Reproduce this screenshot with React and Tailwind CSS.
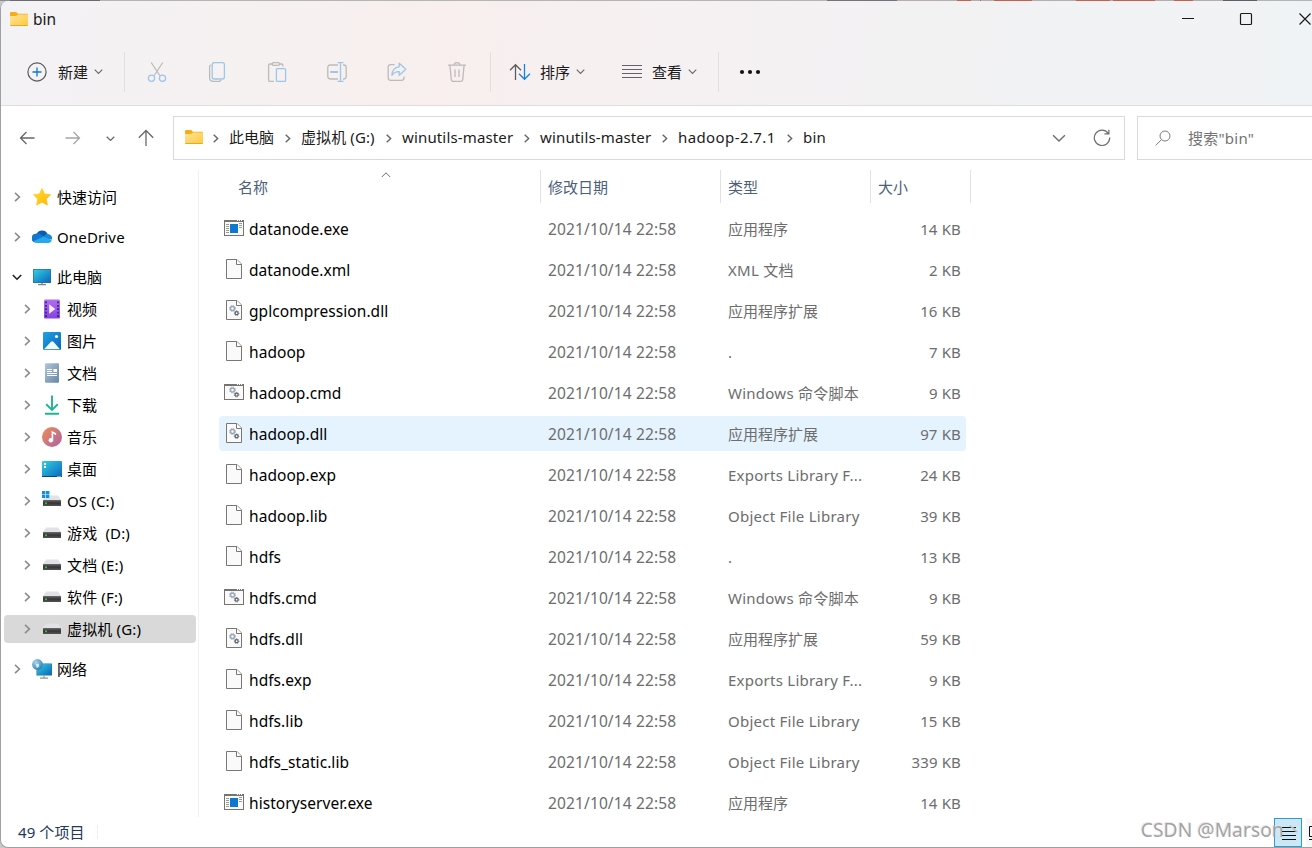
import { useState } from 'react';
import clsx from 'clsx';

const CRUMBS = [
  { label: '此电脑', w: 'w-[45px]' },
  { label: '虚拟机 (G:)', w: 'w-[74px] tracking-[0.1px]' },
  { label: 'winutils-master', w: 'w-[111px] tracking-[0.15px]' },
  { label: 'winutils-master', w: 'w-[111px] tracking-[0.15px]' },
  { label: 'hadoop-2.7.1', w: 'w-[98px] tracking-[0.4px]' },
  { label: 'bin', w: 'w-[24px] tracking-[0.15px]' },
];

const DATE = '2021/10/14 22:58';

const FILES = [
  { name: 'datanode.exe', type: '应用程序', size: '14 KB', icon: 'exe' },
  { name: 'datanode.xml', type: 'XML 文档', size: '2 KB', icon: 'file' },
  { name: 'gplcompression.dll', type: '应用程序扩展', size: '16 KB', icon: 'dll' },
  { name: 'hadoop', type: '.', size: '7 KB', icon: 'file' },
  { name: 'hadoop.cmd', type: 'Windows 命令脚本', size: '9 KB', icon: 'cmd' },
  { name: 'hadoop.dll', type: '应用程序扩展', size: '97 KB', icon: 'dll' },
  { name: 'hadoop.exp', type: 'Exports Library F...', size: '24 KB', icon: 'file' },
  { name: 'hadoop.lib', type: 'Object File Library', size: '39 KB', icon: 'file' },
  { name: 'hdfs', type: '.', size: '13 KB', icon: 'file' },
  { name: 'hdfs.cmd', type: 'Windows 命令脚本', size: '9 KB', icon: 'cmd' },
  { name: 'hdfs.dll', type: '应用程序扩展', size: '59 KB', icon: 'dll' },
  { name: 'hdfs.exp', type: 'Exports Library F...', size: '9 KB', icon: 'file' },
  { name: 'hdfs.lib', type: 'Object File Library', size: '15 KB', icon: 'file' },
  { name: 'hdfs_static.lib', type: 'Object File Library', size: '339 KB', icon: 'file' },
  { name: 'historyserver.exe', type: '应用程序', size: '14 KB', icon: 'exe' },
];

const DRIVES = [
  { label: '视频', icon: 'video' },
  { label: '图片', icon: 'picture' },
  { label: '文档', icon: 'document' },
  { label: '下载', icon: 'download' },
  { label: '音乐', icon: 'music' },
  { label: '桌面', icon: 'desktop' },
  { label: 'OS (C:)', icon: 'osdrive' },
  { label: '游戏  (D:)', icon: 'drive' },
  { label: '文档 (E:)', icon: 'drive' },
  { label: '软件 (F:)', icon: 'drive' },
  { label: '虚拟机 (G:)', icon: 'drive' },
];

// [width, colour] runs of the window that shows behind the top edge
const EDGE = [
  [10, '#8a8d99'], [90, '#6f6a72'], [727, '#b4b4b4'], [70, '#77727a'], [60, '#b4aeb0'],
  [14, '#c4604f'], [9, '#b4aeb0'], [1, '#c4604f'], [13, '#b4aeb0'], [38, '#c4604f'],
  [44, '#b4aeb0'], [34, '#c4604f'], [3, '#b4aeb0'], [42, '#c4604f'], [19, '#b4aeb0'],
  [19, '#c4604f'], [30, '#b4aeb0'], [34, '#615d68'], [55, '#b4b4b4'],
];

const hasLatin = (s) => /[A-Za-z]/.test(s);

function Chevron({ dir = 'right', size = 10, color = '#858585', width = 1.5 }) {
  const d = {
    right: 'M3 0.8 L7.4 5 L3 9.2',
    down: 'M0.8 3 L5 7.2 L9.2 3',
    up: 'M0.8 7 L5 2.8 L9.2 7',
  }[dir];
  return (
    <svg width={size} height={size} viewBox="0 0 10 10" className="shrink-0" fill="none" stroke={color} strokeWidth={width}>
      <path d={d} />
    </svg>
  );
}

function Folder() {
  return (
    <svg width="18" height="14" viewBox="0 0 18 14" className="shrink-0">
      <defs>
        <linearGradient id="folder" x1="0" y1="0" x2="1" y2="1">
          <stop offset="0" stopColor="#ffe59a" />
          <stop offset="1" stopColor="#fdc83c" />
        </linearGradient>
      </defs>
      <path d="M0 1 Q0 0 1 0 H6.2 L8 1.8 H17 Q18 1.8 18 2.8 V6 H0 Z" fill="#f5ae17" />
      <path d="M0 4 H6 L8 2.6 H18 V13 Q18 14 17 14 H1 Q0 14 0 13 Z" fill="url(#folder)" />
      <path d="M0.3 13.5 H17.7" stroke="#e9a82b" strokeWidth="1" />
    </svg>
  );
}

function Gears() {
  return (
    <g fill="none">
      <circle cx="8.5" cy="8.5" r="2" stroke="#9aa7b4" strokeWidth="1.4" />
      <circle cx="8.5" cy="8.5" r="3" stroke="#9aa7b4" strokeWidth="1" strokeDasharray="1.2 1.16" />
      <circle cx="12.6" cy="13.2" r="1.5" stroke="#5c666e" strokeWidth="1.3" />
      <circle cx="12.6" cy="13.2" r="2.3" stroke="#5c666e" strokeWidth="0.9" strokeDasharray="1 0.8" />
    </g>
  );
}

function FileIcon({ type }) {
  if (type === 'exe' || type === 'cmd') {
    return (
      <svg width="20" height="20" viewBox="0 0 20 20" className="mb-0.5 shrink-0">
        <rect x="0.5" y="2.5" width="19" height="15" fill="#fafafa" stroke="#77736e" />
        <path d="M0 3 H20" stroke="#77736e" strokeWidth="2" />
        <path d="M13 2.5 h1 M15 2.5 h1 M17 2.5 h1" stroke="#fff" />
        {type === 'exe' ? (
          <>
            <path d="M2 6.5 h3 M2 8.5 h3 M2 10.5 h3 M2 12.5 h3 M2 14.5 h3 M15 5.5 h3 M15 7.5 h3 M15 9.5 h3" stroke="#9a9a9a" />
            <rect x="6" y="6" width="8" height="9" fill="#0c78d2" />
          </>
        ) : (
          <g transform="translate(0 -0.5)"><Gears /></g>
        )}
      </svg>
    );
  }
  return (
    <svg width="20" height="20" viewBox="0 0 20 20" className="mb-0.5 shrink-0">
      <path d="M2.5 0.5 H13 L17.5 5 V19.5 H2.5 Z" fill="#fafafa" stroke="#7a7671" />
      <path d="M12.5 0.5 V5.5 H17.5" fill="#fff" stroke="#7a7671" />
      {type === 'dll' && <Gears />}
    </svg>
  );
}

function SideIcon({ name }) {
  return (
    <svg width="20" height="20" viewBox="0 0 20 20" className="shrink-0">
      <defs>
        <linearGradient id="screen" x1="0" y1="0" x2="1" y2="1">
          <stop offset="0" stopColor="#31d0e0" />
          <stop offset="1" stopColor="#0a67bd" />
        </linearGradient>
        <linearGradient id="star" x1="0" y1="0" x2="1" y2="1">
          <stop offset="0" stopColor="#ffdc28" />
          <stop offset="1" stopColor="#fdb70e" />
        </linearGradient>
        <linearGradient id="video" x1="0" y1="0" x2="0" y2="1">
          <stop offset="0" stopColor="#b070ee" />
          <stop offset="1" stopColor="#8443e0" />
        </linearGradient>
        <linearGradient id="pic" x1="0" y1="0" x2="1" y2="1">
          <stop offset="0" stopColor="#1fa2e6" />
          <stop offset="1" stopColor="#0a66b9" />
        </linearGradient>
        <linearGradient id="doc" x1="0" y1="0" x2="1" y2="1">
          <stop offset="0" stopColor="#b3c6d8" />
          <stop offset="1" stopColor="#6685a6" />
        </linearGradient>
        <linearGradient id="music" x1="0" y1="0" x2="1" y2="1">
          <stop offset="0" stopColor="#f18d50" />
          <stop offset="1" stopColor="#ab62ab" />
        </linearGradient>
        <radialGradient id="globe" cx="0.35" cy="0.3" r="0.8">
          <stop offset="0" stopColor="#a6d4ec" />
          <stop offset="1" stopColor="#2779ad" />
        </radialGradient>
        <linearGradient id="drive" x1="0" y1="0" x2="0" y2="1">
          <stop offset="0" stopColor="#6a6a6a" />
          <stop offset="0.5" stopColor="#333" />
          <stop offset="1" stopColor="#555" />
        </linearGradient>
      </defs>
      {name === 'star' && (
        <path d="M10 1.5 L12.6 7 L18.6 7.8 L14.3 12 L15.3 18 L10 15.2 L4.7 18 L5.7 12 L1.4 7.8 L7.4 7 Z" fill="url(#star)" stroke="url(#star)" strokeWidth="0.8" strokeLinejoin="round" />
      )}
      {name === 'cloud' && (
        <>
          <path d="M4.4 7.2 A6.2 6.2 0 0 1 15.6 6.8 L10.5 12 Z" fill="#0a5cae" />
          <path d="M3.8 6.8 A5 5 0 0 1 9 7.5 L14 10.5 L3 15.5 A4.4 4.4 0 0 1 3.8 6.8 Z" fill="#1078d0" />
          <path d="M12.8 8.2 Q14.5 6.3 17 7.3 A4 4 0 0 1 19.9 12.5 L12 12 Z" fill="#168ade" />
          <path d="M1.5 14.2 L11.5 9.6 L19.7 13 A3.6 3.6 0 0 1 16.2 16 H4.7 Q2.7 16 1.5 14.2 Z" fill="#28a8ea" />
        </>
      )}
      {name === 'pc' && (
        <>
          <rect x="1" y="2" width="18" height="14" rx="0.5" fill="#277097" />
          <rect x="1.7" y="2.7" width="16.6" height="12.6" fill="url(#screen)" />
          <path d="M10 16 V17.5 M6 17.6 H14" stroke="#7b8791" strokeWidth="1.4" />
        </>
      )}
      {name === 'video' && (
        <>
          <rect x="2" y="0.5" width="16" height="19" rx="1.2" fill="url(#video)" />
          <path d="M4 2.5 V18 M16 2.5 V18" stroke="#40207c" strokeWidth="1.8" strokeDasharray="1.8 1.6" />
          <path d="M7.2 5.2 L13.3 10 L7.2 14.8 Z" fill="#f5ebff" />
        </>
      )}
      {name === 'picture' && (
        <>
          <rect x="1" y="1" width="18" height="18" rx="1.2" fill="url(#pic)" />
          <path d="M2 18.2 L9 10.8 Q10.2 9.6 11.4 10.8 L18 18.2 Z" fill="#f2f9fe" />
          <circle cx="14.5" cy="5.5" r="1.6" fill="#fff" />
        </>
      )}
      {name === 'document' && (
        <>
          <rect x="3" y="0.2" width="14" height="19.6" rx="1" fill="url(#doc)" />
          <path d="M5 6.5 h5 M5 8.5 h5 M5 10.5 h10 M5 12.5 h10" stroke="#fff" strokeWidth="1" />
          <rect x="11.5" y="6" width="3.5" height="3" fill="#fff" />
        </>
      )}
      {name === 'download' && (
        <path d="M10 0.5 V15 M4.2 9.3 L10 15 L15.8 9.3 M3 18.8 H17" fill="none" stroke="#1fb492" strokeWidth="1.9" />
      )}
      {name === 'music' && (
        <>
          <circle cx="10" cy="10" r="10" fill="url(#music)" />
          <path d="M10.4 14 V5 L13.3 6.6 V8" fill="none" stroke="#fff" strokeWidth="1.6" />
          <circle cx="8.8" cy="13.2" r="2.2" fill="#fff" />
        </>
      )}
      {name === 'desktop' && (
        <>
          <rect x="0" y="2" width="20" height="16" rx="0.8" fill="url(#screen)" />
          <path d="M0 17.5 H20" stroke="#0d4673" strokeWidth="1" />
          <path d="M2 5 h2 M2 8 h2" stroke="#fff" strokeWidth="1.9" />
          <path d="M15.5 17.5 h1 M17.5 17.5 h1" stroke="#fff" strokeWidth="1" />
        </>
      )}
      {(name === 'drive' || name === 'osdrive') && (
        <>
          <path d="M4 4.5 H16 L19 9 H1 Z" fill="#e2e2e6" />
          <rect x="1" y="9" width="18" height="6" rx="0.5" fill="url(#drive)" />
          <rect x="3.2" y="11.5" width="1.6" height="1.6" fill="#36e04a" />
        </>
      )}
      {name === 'osdrive' && (
        <>
          <rect x="0" y="0" width="8" height="7" fill="#fff" />
          <path d="M0 0 h3.4 v3.2 h-3.4 z M4 0 h3.4 v3.2 h-3.4 z M0 3.8 h3.4 v3.2 h-3.4 z M4 3.8 h3.4 v3.2 h-3.4 z" fill="#1090da" />
        </>
      )}
      {name === 'network' && (
        <>
          <rect x="4.5" y="4.5" width="15.5" height="12" rx="0.5" fill="#277097" />
          <rect x="5" y="5" width="14.5" height="11" fill="url(#screen)" />
          <path d="M12 16.5 V19 M8 19.2 H16" stroke="#8a949c" strokeWidth="1.2" />
          <circle cx="5.5" cy="5.5" r="5.4" fill="url(#globe)" />
          <path d="M3.5 4 Q5.5 6 6.8 4.2 L7 7.5 L4.8 9 Z" fill="#d5ecf7" />
        </>
      )}
    </svg>
  );
}

function ToolIcon({ name }) {
  const gray = '#bdbaba';
  const blue = '#9bc7ea';
  return (
    <div className="flex w-[60px] justify-center">
      <svg width="20" height="20" viewBox="0 0 20 20" fill="none" stroke={gray} strokeWidth="1.3">
        {name === 'cut' && (
          <>
            <path d="M4.2 0.5 L12.8 13.5 M15.8 0.5 L7.2 13.5" />
            <circle cx="4.5" cy="16.3" r="3.1" stroke={blue} />
            <circle cx="15.5" cy="16.3" r="3.1" stroke={blue} />
          </>
        )}
        {name === 'copy' && (
          <>
            <path d="M4 2.8 Q2.6 3.3 2.6 5 V15.5 Q2.6 19.4 6.5 19.4 H11.8 Q13.5 19.4 14 18" />
            <rect x="5.2" y="0.6" width="12.2" height="16.4" rx="2" stroke={blue} />
          </>
        )}
        {name === 'paste' && (
          <>
            <path d="M5 2 H2.8 Q1.6 2 1.6 3.2 V18.2 Q1.6 19.4 2.8 19.4 H7 M12.5 2 H14.7 Q15.9 2 15.9 3.2 V4.5" />
            <rect x="5.2" y="0.6" width="7.3" height="2.8" rx="1.4" />
            <rect x="9.4" y="6.6" width="9.2" height="12.8" rx="1.2" stroke={blue} />
          </>
        )}
        {name === 'rename' && (
          <>
            <path d="M11 3 H3.2 Q0.8 3 0.8 5.4 V14.6 Q0.8 17 3.2 17 H11 M16 3 H16.8 Q19.2 3 19.2 5.4 V14.6 Q19.2 17 16.8 17 H16" />
            <path d="M10.5 0.6 H16.5 M10.5 19.4 H16.5 M13.5 0.6 V19.4" stroke={blue} />
            <path d="M3.2 10 H11" stroke={blue} strokeWidth="2" />
          </>
        )}
        {name === 'share' && (
          <>
            <path d="M7.5 2.6 H3.8 Q1.2 2.6 1.2 5.2 V15.8 Q1.2 18.4 3.8 18.4 H14.4 Q17 18.4 17 15.8 V14.5" />
            <path d="M12.2 1.2 L18.8 7.2 L12.2 13.2 V9.6 Q7.6 9.3 4.9 13.3 Q5.2 5.5 12.2 4.8 Z" stroke={blue} strokeLinejoin="round" />
          </>
        )}
        {name === 'delete' && (
          <path d="M1 3.2 H19 M7.2 3.2 Q7.2 0.7 10 0.7 Q12.8 0.7 12.8 3.2 M2.9 3.2 L4.3 17.6 Q4.5 19.4 6.2 19.4 H13.8 Q15.5 19.4 15.7 17.6 L17.1 3.2 M8 7.5 V15 M12 7.5 V15" />
        )}
      </svg>
    </div>
  );
}

function Divider() {
  return <div className="h-10 w-px bg-[#e2dfdf]" />;
}

function TopBar() {
  return (
    <header className="h-[105px] shrink-0 border-b border-[#dfdcdc] bg-[linear-gradient(97deg,#f3f2f5_0%,#f6f1f1_20%,#f8efee_34%,#f5f1f3_55%,#f2f2f3_72%,#f0f3f5_100%)]">
      <div className="flex h-[37px] items-center justify-between pl-[9px]">
        <div className="flex items-center gap-[5px]">
          <div className="pb-px"><Folder /></div>
          <span className="pt-px text-[15.5px] text-[#1b1b1b]">bin</span>
        </div>
        <div className="-mr-[22px] flex pb-px">
          {['M4 9.5 H16', 'M5.5 4.5 H14.5 Q15.5 4.5 15.5 5.5 V14.5 Q15.5 15.5 14.5 15.5 H5.5 Q4.5 15.5 4.5 14.5 V5.5 Q4.5 4.5 5.5 4.5 Z', 'M4.5 4.5 L15.5 15.5 M15.5 4.5 L4.5 15.5'].map((d) => (
            <button key={d} className="flex w-[58.5px] justify-center">
              <svg width="20" height="20" viewBox="0 0 20 20" fill="none" stroke="#1a1a1a" strokeWidth="1.2">
                <path d={d} />
              </svg>
            </button>
          ))}
        </div>
      </div>

      <div className="flex h-[67px] items-center pl-[26px] text-[15px] text-[#1b1b1b]">
        <button className="flex w-[97px] items-center">
          <svg width="20" height="20" viewBox="0 0 20 20" fill="none">
            <circle cx="10" cy="10" r="9.1" stroke="#585858" strokeWidth="1.2" />
            <path d="M10 5.5 V14.5 M5.5 10 H14.5" stroke="#0f77cf" strokeWidth="1.3" />
          </svg>
          <span className="ml-[11px] mr-1.5 pt-0.5">新建</span>
          <Chevron dir="down" size={9} color="#666" width={1.2} />
        </button>
        <Divider />
        <div className="ml-[2px] flex w-[363px]">
          <ToolIcon name="cut" />
          <ToolIcon name="copy" />
          <ToolIcon name="paste" />
          <ToolIcon name="rename" />
          <ToolIcon name="share" />
          <ToolIcon name="delete" />
        </div>
        <Divider />
        <button className="ml-[18px] flex w-[112px] items-center">
          <svg width="22" height="20" viewBox="0 0 22 20" fill="none" strokeWidth="1.3">
            <path d="M6.5 18 V2.8 M1 8.2 L6.5 2.7 L12 8.2" stroke="#5c5c5c" />
            <path d="M15.5 2 V17.2 M10 11.8 L15.5 17.3 L21 11.8" stroke="#1584dd" />
          </svg>
          <span className="ml-[9px] mr-1.5 pt-0.5">排序</span>
          <Chevron dir="down" size={9} color="#666" width={1.2} />
        </button>
        <button className="flex w-[97px] items-center pl-px">
          <svg width="20" height="20" viewBox="0 0 20 20" stroke="#646266">
            <path d="M0 3.5 H20 M0 7.5 H20 M0 11.5 H20 M0 15.5 H20" />
          </svg>
          <span className="ml-2.5 mr-1.5 pt-0.5">查看</span>
          <Chevron dir="down" size={9} color="#666" width={1.2} />
        </button>
        <Divider />
        <svg width="22" height="6" viewBox="0 0 22 6" className="ml-[19.5px]" fill="#151515">
          <circle cx="3" cy="3" r="2.1" />
          <circle cx="11" cy="3" r="2.1" />
          <circle cx="19" cy="3" r="2.1" />
        </svg>
      </div>
    </header>
  );
}

function AddressRow() {
  return (
    <div className="flex h-16 shrink-0 items-center text-[15px] text-[#1b1b1b]">
      <div className="flex w-[172px] items-center pl-[18px]">
        <svg width="16" height="16" viewBox="0 0 16 16" fill="none" stroke="#666" strokeWidth="1.3">
          <path d="M15.5 8 H1.5 M7.5 2 L1.5 8 L7.5 14" />
        </svg>
        <svg width="16" height="16" viewBox="0 0 16 16" className="ml-[30px]" fill="none" stroke="#a5a5a5" strokeWidth="1.3">
          <path d="M0.5 8 H14.5 M8.5 2 L14.5 8 L8.5 14" />
        </svg>
        <div className="ml-[25px]"><Chevron dir="down" size={9} color="#666" width={1.4} /></div>
        <svg width="18" height="18" viewBox="0 0 18 18" className="ml-[22px]" fill="none" stroke="#666" strokeWidth="1.3">
          <path d="M9 17 V1.5 M1.8 8.7 L9 1.5 L16.2 8.7" />
        </svg>
      </div>
      <div className="flex h-11 w-[952px] items-center border border-[#d9d9d9] pl-[11px]">
        <div className="pb-0.5"><Folder /></div>
        <div className="-ml-px flex">
          {CRUMBS.map((c, i) => (
            <div key={i} className="flex items-center">
              <span className="flex w-[27px] justify-center"><Chevron size={9} color="#666" width={1.6} /></span>
              <span className={clsx('whitespace-nowrap pb-0.5', c.w)}>{c.label}</span>
            </div>
          ))}
        </div>
        <div className="ml-auto flex items-center gap-[27px] pr-[13px]">
          <Chevron dir="down" size={14} color="#6d6d6d" width={1} />
          <svg width="18" height="18" viewBox="0 0 18 18" fill="none" stroke="#6d6d6d" strokeWidth="1.2">
            <path d="M15.2 4.2 A7.7 7.7 0 1 0 16.7 8.6 M15.9 0.8 V4.9 H11.4" />
          </svg>
        </div>
      </div>
      <div className="ml-3 flex h-11 flex-1 items-center border border-r-0 border-[#d9d9d9] pl-[17px] text-[#737373]">
        <svg width="16" height="16" viewBox="0 0 16 16" fill="none" stroke="#7d7d7d" strokeWidth="1">
          <circle cx="10" cy="6" r="5" />
          <path d="M6.5 9.6 L0.8 15.3" />
        </svg>
        <span className="ml-[17px] tracking-[0.25px]">搜索"bin"</span>
      </div>
    </div>
  );
}

function SideRow({ label, icon, open, child, active, onClick }) {
  return (
    <div
      onClick={onClick}
      className={clsx(
        'flex shrink-0 cursor-default items-center whitespace-pre rounded-sm',
        child ? 'my-0.5 h-7 pl-[18px]' : 'my-1 h-8 pl-2',
        active && 'bg-[#d9d9d9]'
      )}
    >
      <Chevron dir={open ? 'down' : 'right'} size={10} color={open ? '#222' : '#8b8b8b'} width={1.6} />
      <span className="ml-[10px] mr-[5px]"><SideIcon name={icon} /></span>
      <span className={clsx(hasLatin(label) && 'tracking-[0.15px]')}>{label}</span>
    </div>
  );
}

function Sidebar() {
  const [active, setActive] = useState('虚拟机 (G:)');
  return (
    <nav className="flex w-[198px] shrink-0 flex-col border-r border-[#f0f0f0] pl-[3px] pr-0.5 pt-[7px] text-[15px] text-black">
      <SideRow label="快速访问" icon="star" />
      <SideRow label="OneDrive" icon="cloud" />
      <SideRow label="此电脑" icon="pc" open />
      <div className="-mt-1 mb-1 flex flex-col">
        {DRIVES.map((d) => (
          <SideRow key={d.label} {...d} child active={active === d.label} onClick={() => setActive(d.label)} />
        ))}
      </div>
      <SideRow label="网络" icon="network" />
    </nav>
  );
}

function FileList() {
  const [hover, setHover] = useState('hadoop.dll');
  return (
    <main className="min-w-0 flex-1 overflow-hidden pl-5">
      <div className="flex h-[33px] items-center text-[15px] text-[#4c607a]">
        <div className="relative flex h-full w-[322px] items-center border-r border-[#e2e2e2] pl-[19px] pt-0.5">
          名称
          <span className="absolute left-[161.5px] top-0"><Chevron dir="up" size={10} color="#6d6d6d" width={1} /></span>
        </div>
        <div className="flex h-full w-[180px] items-center border-r border-[#e2e2e2] pl-[7px] pt-0.5">修改日期</div>
        <div className="flex h-full w-[150px] items-center border-r border-[#e2e2e2] pl-[7px] pt-0.5">类型</div>
        <div className="flex h-full w-[100px] items-center border-r border-[#e2e2e2] pl-[7px] pt-0.5">大小</div>
      </div>
      <div className="pt-[5px]">
        {FILES.map((f) => (
          <div
            key={f.name}
            onMouseEnter={() => setHover(f.name)}
            className={clsx(
              'mb-1.5 mt-[3px] flex h-[35px] w-[747px] items-center rounded-sm px-[5px] text-[15px] text-[#6d6d6d]',
              hover === f.name && 'bg-[#e5f3ff]'
            )}
          >
            <FileIcon type={f.icon} />
            <div className="ml-[5px] flex flex-1 items-center pt-px">
              <span className="w-[299px] pt-0.5 text-[15.5px] tracking-[0.06px] text-black">{f.name}</span>
              <span className="w-[180px] pt-0.5 text-[15.5px] tracking-[0.13px]">{DATE}</span>
              <span className={clsx('w-[140px] whitespace-nowrap', hasLatin(f.type) && 'tracking-[0.25px]')}>{f.type}</span>
              <span className="flex-1 whitespace-nowrap text-right tracking-[0.15px]">{f.size}</span>
            </div>
          </div>
        ))}
      </div>
    </main>
  );
}

function StatusBar() {
  return (
    <footer className="relative flex h-[30px] shrink-0 items-center justify-between text-[15px] text-[#1e395b]">
      <div className="flex items-center">
        <span className="w-20 whitespace-nowrap pl-[17px] tracking-[0.1px]">49 个项目</span>
        <div className="ml-4 h-3.5 w-px bg-[#f0f0f0]" />
      </div>
      <div className="flex h-full items-end gap-1">
        <div className="flex h-[29px] w-7 items-center justify-center border border-[#26a0da] bg-[#cce8f6] pl-0.5 pt-0.5">
          <svg width="14" height="14" viewBox="0 0 14 14" stroke="#111">
            <path d="M0 0.5 H14 M0 4.5 H14 M0 8.5 H14 M0 12.5 H14" />
          </svg>
        </div>
        <div className="flex h-[29px] w-[6px] items-center overflow-hidden bg-[#f7f7f7]">
          <svg width="14" height="14" viewBox="0 0 14 14" className="ml-[3px] shrink-0" fill="none" stroke="#111">
            <path d="M0.5 0.5 H13 V10.5 H0.5 Z M0 13.5 H14" />
          </svg>
        </div>
      </div>
      <div className="pointer-events-none absolute right-[9px] top-px whitespace-nowrap text-[19.3px] leading-6 text-[#969696]/85 [text-shadow:-1px_-1px_0_#e8e8e8]">
        CSDN @Marson<span className="text-[#969696]/50">丶</span>
      </div>
    </footer>
  );
}

export default function App() {
  return (
    <div className="flex h-[848px] w-[1312px] flex-col overflow-hidden bg-[#c9c9cc] font-['Noto_Sans','Noto_Sans_CJK_SC',sans-serif]">
      <div className="flex h-px shrink-0">
        {EDGE.map(([w, color], i) => (
          <span key={i} className="h-px" style={{ width: w, background: color }} />
        ))}
      </div>
      <div className="flex h-[847px] flex-col overflow-hidden rounded-l-lg border-b border-l border-[#a0a0a0] bg-white">
        <TopBar />
        <AddressRow />
        <div className="flex h-[647px] shrink-0 overflow-hidden">
          <Sidebar />
          <FileList />
        </div>
        <StatusBar />
      </div>
    </div>
  );
}
